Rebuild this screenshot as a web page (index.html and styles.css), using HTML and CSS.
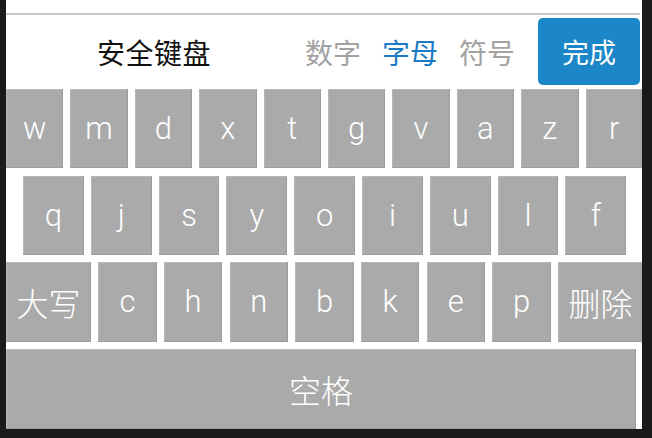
FILE: index.html
```html
<!DOCTYPE html>
<html lang="zh-CN">
<head>
<meta charset="utf-8">
<title>安全键盘</title>
<link rel="stylesheet" href="styles.css">
</head>
<body>
<div class="panel">
  <div class="topline"></div>
  <div class="header">
    <div class="title">安全键盘</div>
    <div class="tabs">
      <span class="tab">数字</span>
      <span class="tab active">字母</span>
      <span class="tab">符号</span>
    </div>
    <button class="done">完成</button>
  </div>
  <div class="keyboard">
    <div class="row row1">
      <div class="key">w</div><div class="key">m</div><div class="key">d</div><div class="key">x</div><div class="key">t</div><div class="key">g</div><div class="key">v</div><div class="key">a</div><div class="key">z</div><div class="key">r</div>
    </div>
    <div class="row row2">
      <div class="key">q</div><div class="key">j</div><div class="key">s</div><div class="key">y</div><div class="key">o</div><div class="key">i</div><div class="key">u</div><div class="key">l</div><div class="key">f</div>
    </div>
    <div class="row row3">
      <div class="key wide cjk">大写</div><div class="key">c</div><div class="key">h</div><div class="key">n</div><div class="key">b</div><div class="key">k</div><div class="key">e</div><div class="key">p</div><div class="key wide cjk">删除</div>
    </div>
    <div class="row row4">
      <div class="key space cjk">空格</div>
    </div>
  </div>
</div>
</body>
</html>
```

FILE: styles.css
```css
html, body {
  margin: 0;
  padding: 0;
  background: #1a1a1a;
  height: 100%;
}
body {
  font-family: "Noto Sans CJK SC", "Noto Sans", sans-serif;
}
.panel {
  margin-left: 6px;
  width: 636px;
  height: 429px;
  background: #ffffff;
  overflow: hidden;
  display: flex;
  flex-direction: column;
}
.topline {
  margin-top: 13px;
  height: 1.5px;
  width: 634px;
  background: #c6c6c6;
}
.header {
  height: 74.5px;
  display: flex;
  align-items: center;
}
.title {
  margin-left: 91px;
  font-size: 28px;
  line-height: 1;
  color: #111;
  letter-spacing: 0.5px;
}
.tabs {
  margin-left: 94px;
  display: flex;
  gap: 21px;
}
.tab {
  font-size: 28px;
  line-height: 1;
  color: #a2a2a2;
}
.tab.active {
  color: #1a7ac2;
}
.done {
  margin-left: auto;
  margin-right: 2px;
  width: 102px;
  height: 67px;
  border: none;
  border-radius: 5px;
  background: #1c87c8;
  color: #fff;
  font-family: "Noto Sans CJK SC", sans-serif;
  font-size: 27px;
  padding: 0;
}
.keyboard {
  display: flex;
  flex-direction: column;
  gap: 7.33px;
  flex: 1;
}
.row {
  display: flex;
  height: 79.33px;
  flex: none;
}
.row1 { gap: 7px; }
.row2 { gap: 7px; padding-left: 17px; }
.row3 { gap: 7.2px; }
.row4 { flex: 1; height: auto; }
.key {
  flex: none;
  background: #aaaaaa;
  color: #ffffff;
  display: flex;
  align-items: center;
  justify-content: center;
  font-family: "Roboto", "Liberation Sans", sans-serif;
  font-weight: 300;
  font-size: 31px;
  box-shadow: inset -1px -1px 0 #9c9c9c, inset 1px 1px 0 #b8b8b8;
}
.row1 .key { width: 57.4px; }
.row2 .key { width: 60.8px; }
.row3 .key { width: 58.5px; }
.row3 .key.wide { width: 85px; }
.cjk {
  font-family: "Noto Sans CJK SC", sans-serif;
  font-weight: 300;
  font-size: 32px;
}
.key.space {
  width: 630px;
}
```
